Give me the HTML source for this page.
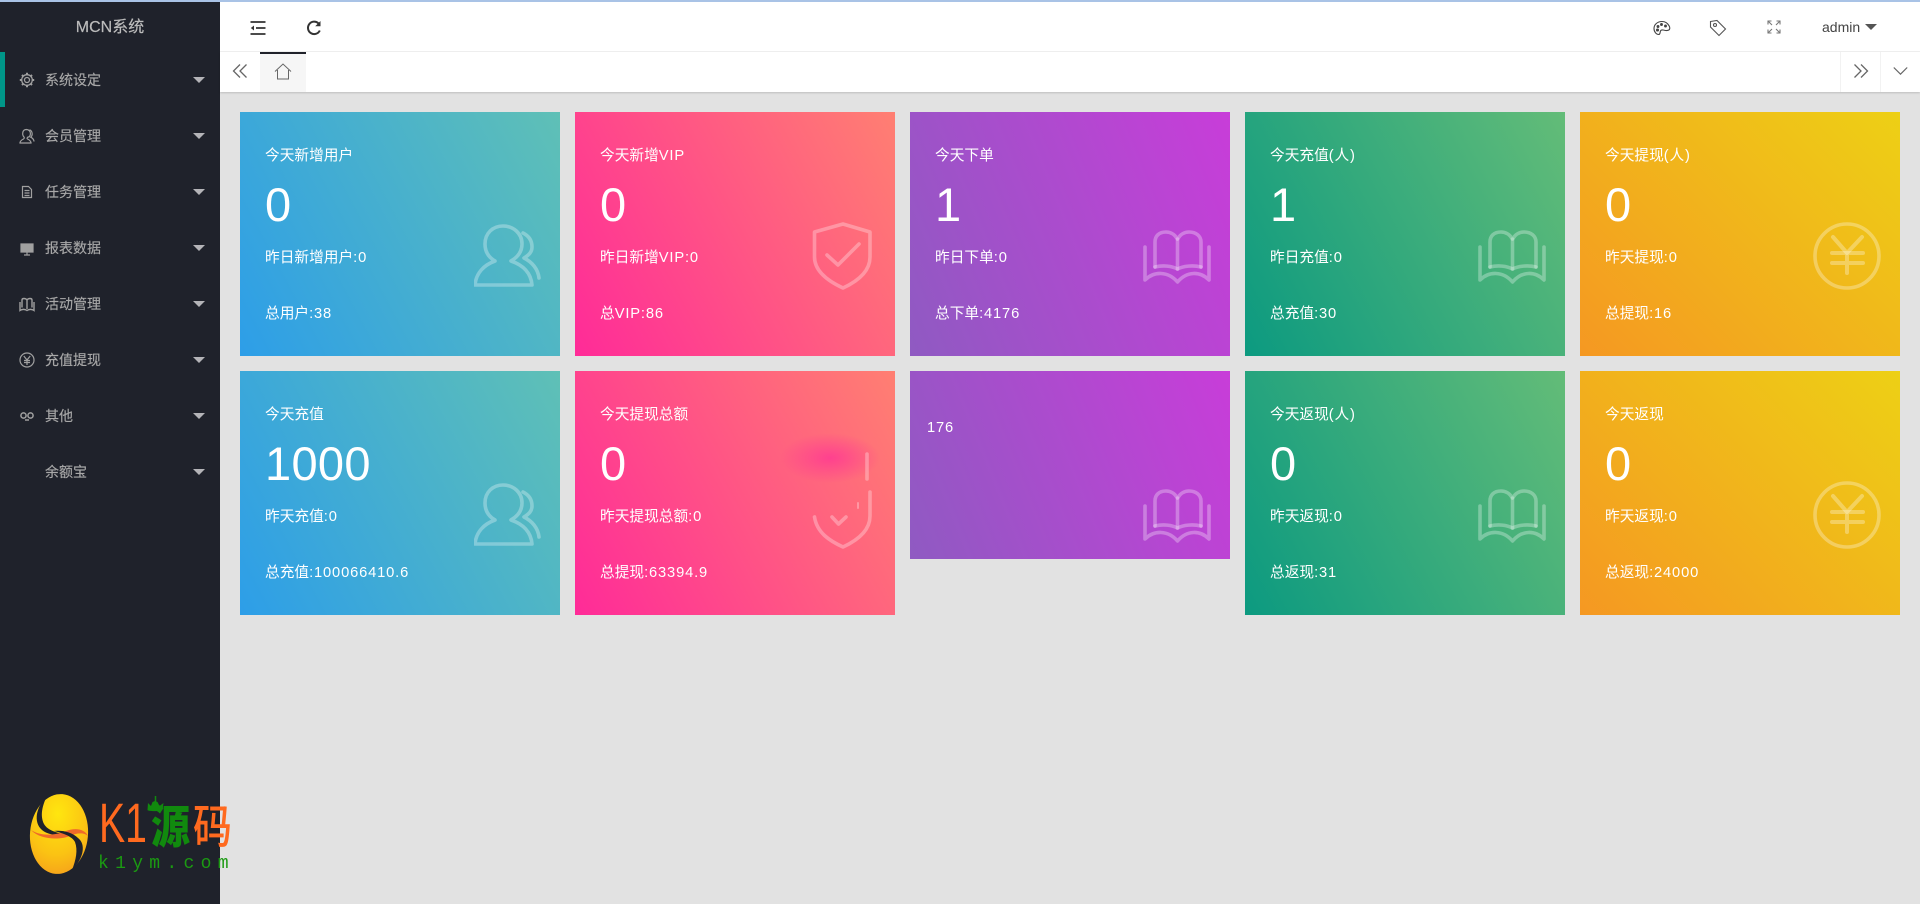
<!DOCTYPE html>
<html lang="zh">
<head>
<meta charset="utf-8">
<title>MCN系统</title>
<style>
*{box-sizing:border-box;margin:0;padding:0}
html,body{width:1920px;height:904px;overflow:hidden;background:#e2e2e2;font-family:"Liberation Sans","Noto Sans CJK SC",sans-serif}
.abs{position:absolute}
#strip{left:0;top:0;width:1920px;height:2px;background:#a9c3e6;z-index:9}
#side{left:0;top:0;width:220px;height:904px;background:#1f222b}
#side h1{position:absolute;left:0;top:15px;width:220px;text-align:center;font-size:16px;line-height:26px;font-weight:normal;color:#bcbcbc;-webkit-text-stroke:.2px #bcbcbc}
.bar{position:absolute;left:0;top:52px;width:5px;height:55px;background:#009688}
.m{position:absolute;left:45px;font-size:14px;line-height:20px;color:#a8a8a8;white-space:nowrap;-webkit-text-stroke:.15px #a8a8a8}
.car{position:absolute;left:193px;width:0;height:0;border-left:6px solid transparent;border-right:6px solid transparent;border-top:6px solid #b4b4b8}
.si{position:absolute;left:19px;width:16px;height:16px;fill:none;stroke:#a0a0a0;stroke-width:1.2}
#head{left:220px;top:2px;width:1700px;height:50px;background:#fff;border-bottom:1px solid #f1f1f1}
#tabs{left:220px;top:52px;width:1700px;height:40px;background:#fff;box-shadow:0 1px 2px rgba(0,0,0,.16)}
.hi{position:absolute;fill:none;stroke:#333}
.c{position:absolute;width:320px;height:244px;color:#fff;overflow:hidden}
.c p{position:absolute;left:25px;font-size:14.7px;line-height:20px;white-space:nowrap;color:#fff}
.c p b{font-weight:normal;letter-spacing:.85px}
.c .t{top:34px}
.c .n{top:66px;font-size:47px;letter-spacing:.3px;line-height:54px;left:25px}
.c .y{top:136px}
.c .z{top:192px}
.c svg{position:absolute;fill:none;stroke:rgba(255,255,255,.3);stroke-width:3.6;stroke-linecap:round;stroke-linejoin:round;overflow:visible}
.b{background:linear-gradient(62deg,#2d9ee8,#5fc0b6)}
.p{background:linear-gradient(62deg,#ff2b98,#ff7f72)}
.v{background:linear-gradient(68deg,#8f5ac2,#c83dd9)}
.g{background:linear-gradient(62deg,#0c9a80,#63bc78)}
.o{background:linear-gradient(45deg,#f59822,#edd015)}
.r1{top:112px}.r2{top:371px}
.x1{left:240px}.x2{left:575px}.x3{left:910px}.x4{left:1245px}.x5{left:1580px}
.users{left:234px;top:112px;width:68px;height:64px}
.shield{left:237px;top:110px;width:60px;height:68px}
.book{left:233px;top:118px;width:68px;height:54px}
.yen{left:233px;top:110px;width:68px;height:68px}
#logo{left:0;top:760px;width:260px;height:144px;z-index:5}
</style>
</head>
<body>
<svg width="0" height="0" style="position:absolute">
<defs>
<symbol id="users" viewBox="0 0 68 64"><path d="M21 37C14 33 11 27 11 20C11 9 19 2 29 2C39 2 48 9 48 20C48 27 44 33 37 37C49 41 57 49 58 61H1C2 49 10 41 21 37z"/><path d="M49 9C55 12 58 17 58 23C58 28 55 31 50 34C58 38 64 45 65 54"/></symbol>
<symbol id="shield" viewBox="0 0 60 68"><path d="M31 2L58 10V35C58 50 44 60 31 66C18 60 2.500 50 2.500 35V10Z"/><path d="M15 33L26 43L47 22"/></symbol>
<symbol id="book" viewBox="0 0 68 54"><path d="M2 17V50C11 41 25 41 34.500 52C44 41 57 41 66 50V17"/><path d="M12 37V12C12 6 16 2 23 2C28 2 32 5 34.500 9C37 5 41 2 46 2C53 2 58 6 58 12V37"/><path d="M12 37C20 35 29 36 34.500 39C40 36 50 35 58 37"/><path d="M34.500 9V39"/></symbol>
<symbol id="yen" viewBox="0 0 68 68"><circle cx="34" cy="34" r="32"/><path d="M20 15L34 31L49 15" stroke-width="4"/><path d="M19 31H50M19 41H50M34 31V51" stroke-width="4"/></symbol>
</defs>
</svg>

<div id="strip" class="abs"></div>

<div id="side" class="abs">
<h1>MCN系统</h1>
<div class="bar"></div>

<svg class="si" style="top:72px;stroke-width:1.300" viewBox="0 0 16 16"><circle cx="8" cy="8" r="2.500"/><circle cx="8" cy="8" r="5.300"/><path d="M8 .8v2M8 13.200v2M.8 8h2M13.200 8h2M3 3l1.300 1.300M11.700 11.700L13 13M3 13l1.300-1.300M11.700 4.300L13 3" stroke-width="2"/></svg>
<div class="m" style="top:70px">系统设定</div><div class="car" style="top:77px"></div>

<svg class="si" style="top:128px" viewBox="0 0 16 16"><path d="M10 9c2-2 2.300-7-2.500-7.500C3 1.500 3 7 5 9c.5.800.3 1.500-.5 2C2.500 12 1 13 1 15h11c0-2-1.500-3-3.500-4-.8-.5-.5-1 .5-2z"/><path d="M10.500 1.800c3 1 3.500 5.200 1.300 7.400 1.700.8 3 2.300 3.200 4.300"/></svg>
<div class="m" style="top:126px">会员管理</div><div class="car" style="top:133px"></div>

<svg class="si" style="top:184px;left:21px;width:12px" viewBox="0 0 12 16"><path d="M1.500 2.500h6l3 3v8h-9zM3.500 6.500h5M3.500 9h5M3.500 11.500h5"/></svg>
<div class="m" style="top:182px">任务管理</div><div class="car" style="top:189px"></div>

<svg class="si" style="top:240px" viewBox="0 0 16 16"><path d="M2 4h12v8H2zM8 12v3M5 15h6" fill="#a0a0a0"/></svg>
<div class="m" style="top:238px">报表数据</div><div class="car" style="top:245px"></div>

<svg class="si" style="top:296px;stroke-width:1.400" viewBox="0 0 16 16"><path d="M1 6v8.500c2-1.500 5-1.500 7 0 2-1.500 5-1.500 7 0V6"/><path d="M3 11.500V4c0-1 .8-1.500 2-1.500 1.300 0 2.300.5 3 1.500.7-1 1.700-1.500 3-1.500 1.200 0 2 .5 2 1.500v7.500M8 4v9"/></svg>
<div class="m" style="top:294px">活动管理</div><div class="car" style="top:301px"></div>

<svg class="si" style="top:352px" viewBox="0 0 16 16"><circle cx="8" cy="8" r="7"/><path d="M4.800 4L8 8l3.200-4M5 8.500h6M5 10.500h6M8 8v5"/></svg>
<div class="m" style="top:350px">充值提现</div><div class="car" style="top:357px"></div>

<svg class="si" style="top:408px;stroke-width:1.500" viewBox="0 0 16 16"><circle cx="4.500" cy="7.500" r="2.600"/><circle cx="11.500" cy="7.500" r="2.600"/><path d="M6 12h4"/></svg>
<div class="m" style="top:406px">其他</div><div class="car" style="top:413px"></div>

<div class="m" style="top:462px">余额宝</div><div class="car" style="top:469px"></div>
</div>

<div id="head" class="abs"></div>
<div id="tabs" class="abs"></div>

<svg class="hi" style="left:250px;top:20px;stroke-width:1.800" width="16" height="16" viewBox="0 0 16 16"><path d="M.5 2H15.500M6 8H15.500M.5 14H15.500"/><path d="M4 5.500V10.500L.8 8z" fill="#333" stroke="none"/></svg>
<svg class="hi" style="left:306px;top:20px;stroke-width:2" width="16" height="16" viewBox="0 0 16 16"><path d="M13.800 10.500A6.200 6.200 0 1 1 12.600 3.500"/><path d="M14.500 1V6.300H9.200z" fill="#333" stroke="none"/></svg>

<svg class="hi" style="left:232px;top:63px;stroke:#666;stroke-width:1.300" width="16" height="16" viewBox="0 0 16 16"><path d="M8 1.500L1.500 8 8 14.500M14.500 1.500L8 8l6.500 6.500"/></svg>
<div class="abs" style="left:260px;top:52px;width:46px;height:40px;background:#f6f6f6;border-top:2px solid #20222a"></div>
<svg class="hi" style="left:274px;top:63px;stroke:#666;stroke-width:1" width="18" height="17" viewBox="0 0 18 17"><path d="M1 8.500L9 1l8 7.500M3.500 7v9h11V7"/></svg>

<div class="abs" style="left:1840px;top:52px;width:1px;height:40px;background:#f2f2f2"></div>
<div class="abs" style="left:1880px;top:52px;width:1px;height:40px;background:#f2f2f2"></div>
<svg class="hi" style="left:1853px;top:63px;stroke:#666;stroke-width:1.300" width="16" height="16" viewBox="0 0 16 16"><path d="M1.500 1.500L8 8l-6.500 6.500M8 1.500L14.500 8 8 14.500"/></svg>
<svg class="hi" style="left:1893px;top:66px;stroke:#666;stroke-width:1.200" width="15" height="10" viewBox="0 0 15 10"><path d="M.8 1.500L7.500 8.200 14.200 1.500"/></svg>

<svg class="hi" style="left:1653px;top:20px;stroke:#444;stroke-width:1.100" width="18" height="16" viewBox="0 0 18 16"><path d="M9 1.500C4.500 1.500 1 4.500 1 8.500 1 12 3.500 14.500 5.500 14.500c1.800 0 1.500-1.800 1.800-3 .3-1.300 1.500-1.800 3-1.500 2 .4 4 1.300 6-.3.7-1.200.5-2.800-.3-4C14.500 3 12 1.500 9 1.500z"/><circle cx="5" cy="6.500" r=".9" fill="#444"/><circle cx="8.500" cy="4.500" r=".9" fill="#444"/><circle cx="12.500" cy="6" r=".9" fill="#444"/><circle cx="4.500" cy="10" r="1" fill="#444"/></svg>
<svg class="hi" style="left:1709px;top:19px;stroke:#555;stroke-width:1.100" width="18" height="18" viewBox="0 0 18 18"><path d="M1.500 2.500L8 1.500 16.500 10 10 16.500 1.500 8z"/><circle cx="6" cy="6" r="1.500"/></svg>
<svg class="hi" style="left:1767px;top:20px;stroke:#777;stroke-width:1.100" width="14" height="14" viewBox="0 0 14 14"><path d="M1 4.500V1H4.500M1 1L5 5M13 4.500V1H9.500M13 1L9 5M1 9.500V13H4.500M1 13L5 9M13 9.500V13H9.500M13 13L9 9"/></svg>
<div class="abs" style="left:1822px;top:17px;font-size:14px;line-height:20px;color:#444">admin</div>
<div class="abs" style="left:1865px;top:24px;width:0;height:0;border-left:6px solid transparent;border-right:6px solid transparent;border-top:6px solid #555"></div>

<!-- row 1 -->
<div class="c b r1 x1"><p class="t">今天新增用户</p><p class="n">0</p><p class="y">昨日新增用户<b>:0</b></p><p class="z">总用户<b>:38</b></p><svg class="users"><use href="#users"/></svg></div>
<div class="c p r1 x2"><p class="t">今天新增<b>VIP</b></p><p class="n">0</p><p class="y">昨日新增<b>VIP:0</b></p><p class="z">总<b>VIP:86</b></p><svg class="shield"><use href="#shield"/></svg></div>
<div class="c v r1 x3"><p class="t">今天下单</p><p class="n">1</p><p class="y">昨日下单<b>:0</b></p><p class="z">总下单<b>:4176</b></p><svg class="book"><use href="#book"/></svg></div>
<div class="c g r1 x4"><p class="t">今天充值<b>(人)</b></p><p class="n">1</p><p class="y">昨日充值<b>:0</b></p><p class="z">总充值<b>:30</b></p><svg class="book"><use href="#book"/></svg></div>
<div class="c o r1 x5"><p class="t">今天提现<b>(人)</b></p><p class="n">0</p><p class="y">昨天提现<b>:0</b></p><p class="z">总提现<b>:16</b></p><svg class="yen"><use href="#yen"/></svg></div>

<!-- row 2 -->
<div class="c b r2 x1"><p class="t">今天充值</p><p class="n">1000</p><p class="y">昨天充值<b>:0</b></p><p class="z">总充值<b>:100066410.6</b></p><svg class="users"><use href="#users"/></svg></div>
<div class="c p r2 x2"><p class="t">今天提现总额</p><p class="n">0</p><p class="y">昨天提现总额<b>:0</b></p><p class="z">总提现<b>:63394.9</b></p>
<div style="position:absolute;left:205px;top:62px;width:100px;height:50px;background:radial-gradient(ellipse closest-side,rgba(255,60,145,.9),rgba(255,70,140,0))"></div>
<svg class="shield" viewBox="0 0 60 68"><path d="M55 -27V-2"/><path d="M58 11V35C58 50 44 60 31 66C18 60 5 52 2.500 36"/><path d="M20 36L26.500 43L34 36"/><path d="M46 22V27" stroke-width="2"/></svg>
</div>
<div class="c v r2 x3" style="height:188px"><p style="left:17px;top:47px"><b>176</b></p><svg class="book"><use href="#book"/></svg></div>
<div class="c g r2 x4"><p class="t">今天返现<b>(人)</b></p><p class="n">0</p><p class="y">昨天返现<b>:0</b></p><p class="z">总返现<b>:31</b></p><svg class="book"><use href="#book"/></svg></div>
<div class="c o r2 x5"><p class="t">今天返现</p><p class="n">0</p><p class="y">昨天返现<b>:0</b></p><p class="z">总返现<b>:24000</b></p><svg class="yen"><use href="#yen"/></svg></div>

<!-- logo -->
<svg id="logo" class="abs" viewBox="0 0 260 144">
<defs>
<radialGradient id="eg" cx=".45" cy=".25" r=".85"><stop offset="0" stop-color="#ffe60f"/><stop offset=".6" stop-color="#fbc313"/><stop offset="1" stop-color="#f59c1c"/></radialGradient>
</defs>
<ellipse cx="59" cy="74" rx="29" ry="40" fill="url(#eg)" transform="rotate(5 59 74)"/>
<path d="M47 36C36 47 33 62 42 70C48 75 58 76 68 75C58 73 48 71 44 64C40 56 42 46 47 36z" fill="#1f222b"/>
<path d="M31 70C40 80 60 80 70 76C76 73 84 72 88 76C84 68 74 68 66 71C54 76 40 76 31 70z" fill="#ef6a2a"/>
<path d="M72 110C84 98 86 84 78 78C72 72 62 70 54 71C62 73 72 76 75 82C78 90 76 100 72 110z" fill="#1f222b"/>
<text transform="translate(99 82) scale(.7 1)" font-family="Liberation Sans, sans-serif" fill="#ff6a1f" font-size="56">K1</text>
<text transform="translate(151 83) scale(1 1.18)" font-family="Noto Sans CJK SC, sans-serif" font-size="39" font-weight="900" fill="#118a0e">源</text>
<text transform="translate(193 83) scale(1 1.18)" font-family="Noto Sans CJK SC, sans-serif" font-size="39" font-weight="500" fill="#ff6a1f">码</text>
<path d="M148 43l-.5 7c0 1.500 14 1.500 15 0l1-7-4 3-2-4-2.500-1-2.500 1-1.500 4z" fill="#118a0e"/>
<path d="M155.500 36v6" stroke="#118a0e" stroke-width="1.500"/>
<text x="98" y="108" font-family="Liberation Mono, monospace" font-size="18" letter-spacing="6.300" fill="#1b9a12">k1ym.com</text>
</svg>
</body>
</html>
